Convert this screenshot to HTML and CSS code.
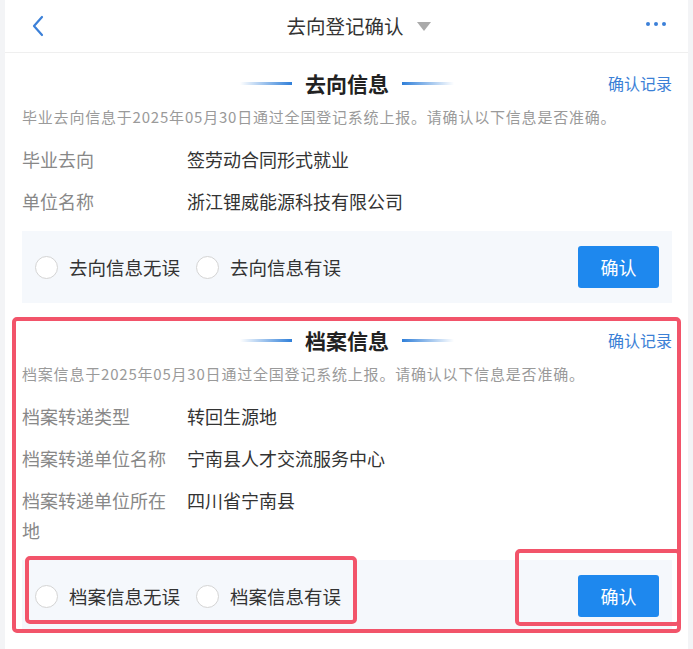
FILE: index.html
```html
<!DOCTYPE html>
<html lang="zh-CN">
<head>
    <meta charset="UTF-8">
    <meta name="viewport" content="width=device-width, initial-scale=1">
    <title>去向登记确认</title>
    <link rel="stylesheet" href="styles.css">
</head>
<body>

<div class="page">
    <header class="nav">
        <svg class="back" width="14" height="24" viewBox="0 0 14 24">
            <path d="M11 3 L3 12 L11 21" fill="none" stroke="#3c80d8" stroke-width="2.2" stroke-linecap="round" stroke-linejoin="round"/>
        </svg>
        <div class="nav-title">去向登记确认<span class="caret"></span></div>
        <div class="more"><i></i><i></i><i></i></div>
    </header>

    <section class="block">
        <div class="block-head">
            <h2 class="block-title"><span class="line line-l"></span>去向信息<span class="line line-r"></span></h2>
            <a class="record">确认记录</a>
        </div>
        <p class="desc">毕业去向信息于2025年05月30日通过全国登记系统上报。请确认以下信息是否准确。</p>
        <dl class="info">
            <div class="row"><dt>毕业去向</dt><dd>签劳动合同形式就业</dd></div>
            <div class="row"><dt>单位名称</dt><dd>浙江锂威能源科技有限公司</dd></div>
        </dl>
        <div class="confirm">
            <label class="radio"><span class="circle"></span>去向信息无误</label>
            <label class="radio"><span class="circle"></span>去向信息有误</label>
            <button class="btn">确认</button>
        </div>
    </section>

    <section class="block marked">
        <div class="block-head">
            <h2 class="block-title"><span class="line line-l"></span>档案信息<span class="line line-r"></span></h2>
            <a class="record">确认记录</a>
        </div>
        <p class="desc">档案信息于2025年05月30日通过全国登记系统上报。请确认以下信息是否准确。</p>
        <dl class="info">
            <div class="row"><dt>档案转递类型</dt><dd>转回生源地</dd></div>
            <div class="row"><dt>档案转递单位名称</dt><dd>宁南县人才交流服务中心</dd></div>
            <div class="row"><dt>档案转递单位所在地</dt><dd>四川省宁南县</dd></div>
        </dl>
        <div class="confirm">
            <label class="radio"><span class="circle"></span>档案信息无误</label>
            <label class="radio"><span class="circle"></span>档案信息有误</label>
            <button class="btn">确认</button>
        </div>

        <div class="mark mark-all"></div>
        <div class="mark mark-radios"></div>
        <div class="mark mark-btn"></div>
    </section>
</div>

</body>
</html>
```

FILE: styles.css
```css
* {
    box-sizing: border-box;
}

html, body {
    margin: 0;
    padding: 0;
}

body {
    font-family: "Noto Sans CJK SC", "Noto Sans", sans-serif;
    background: #f3f4f6;
    color: #333;
    -webkit-font-smoothing: antialiased;
}

.page {
    margin: 0 5px;
    min-height: 649px;
    background: #fff;
}

/* top bar */
.nav {
    height: 53px;
    display: flex;
    align-items: center;
    padding: 0 22px 0 26px;
    border-bottom: 1px solid #efefef;
}

.back {
    display: block;
}

.nav-title {
    flex: 1;
    display: flex;
    justify-content: center;
    align-items: center;
    font-size: 19.5px;
    color: #333;
    margin-left: 26px;
    padding-bottom: 2px;
}

.caret {
    width: 0;
    height: 0;
    margin-left: 13px;
    margin-top: 2px;
    border-left: 7px solid transparent;
    border-right: 7px solid transparent;
    border-top: 9px solid #aaa;
}

.more {
    display: flex;
    gap: 4px;
    padding-bottom: 5px;
}

.more i {
    width: 4px;
    height: 4px;
    border-radius: 50%;
    background: #3c80d8;
}

/* sections */
.block {
    position: relative;
    padding: 16px 16px 7px 17px;
}

.block-head {
    display: grid;
    grid-template-columns: 1fr auto 1fr;
    align-items: center;
}

.block-title {
    grid-column: 2;
    margin: 0;
    display: flex;
    align-items: center;
    font-size: 21px;
    font-weight: 700;
    color: #222;
    line-height: 28px;
}

.line {
    display: block;
    width: 52px;
    height: 3px;
}

.line-l {
    margin-right: 13px;
    background: linear-gradient(to right, rgba(47, 127, 217, 0), #2f7fd9);
}

.line-r {
    margin-left: 13px;
    background: linear-gradient(to right, #2f7fd9, rgba(47, 127, 217, 0));
}

.record {
    justify-self: end;
    font-size: 16px;
    color: #3b80d6;
}

.desc {
    margin: 9px 0 0;
    font-size: 15px;
    letter-spacing: 0.8px;
    line-height: 22px;
    color: #9a9a9a;
}

.info {
    margin: 10px 0 0;
}

.row {
    display: flex;
    padding: 6px 0;
    font-size: 18px;
    line-height: 30px;
}

.row dt {
    width: 155px;
    color: #888;
}

.row dd {
    margin: 0 0 0 10px;
    color: #333;
}

/* confirm bar */
.confirm {
    display: flex;
    align-items: center;
    height: 72px;
    margin-top: 9px;
    padding: 0 13px;
    background: #f5f8fc;
}

.radio {
    display: flex;
    align-items: center;
    font-size: 18.5px;
    color: #333;
    margin-right: 16px;
}

.circle {
    width: 23px;
    height: 23px;
    border: 1px solid #d4d4d4;
    border-radius: 50%;
    background: #fff;
    margin-right: 11px;
}

.btn {
    margin-left: auto;
    width: 81px;
    height: 42px;
    border: 0;
    border-radius: 3px;
    background: #1e88ee;
    color: #fff;
    font-family: inherit;
    font-size: 18px;
}

/* red annotation boxes */
.mark {
    position: absolute;
    border: 4px solid #f2546a;
    border-radius: 5px;
    pointer-events: none;
}

.mark-all {
    left: 7px;
    top: 7px;
    width: 669px;
    height: 316px;
}

.mark-radios {
    left: 20px;
    top: 246px;
    width: 332px;
    height: 68px;
}

.mark-btn {
    left: 510px;
    top: 239px;
    width: 166px;
    height: 77px;
}
```
